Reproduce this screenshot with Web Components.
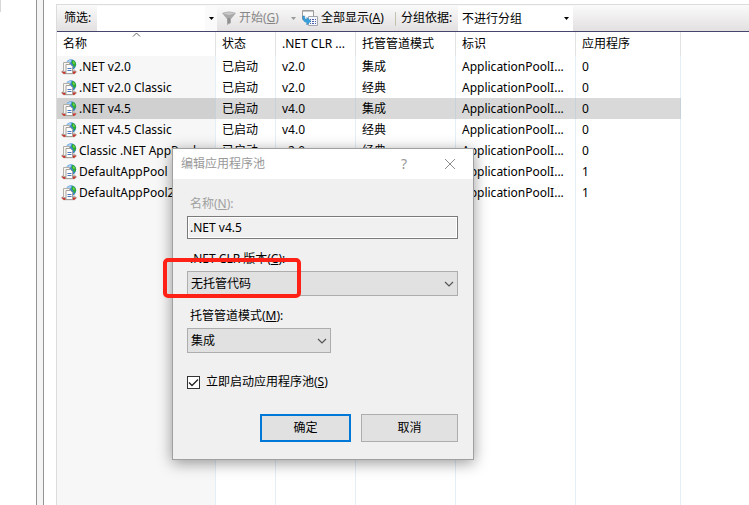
<!DOCTYPE html>
<html lang="zh-CN">
<head>
<meta charset="utf-8">
<title>应用程序池</title>
<style>
    html, body {
        height: 100%;
        margin: 0;
    }

    body {
        font: 12px/20px "Noto Sans", "Noto Sans CJK SC", sans-serif;
        color: #000;
        background: #fff;
        overflow: hidden;
    }
</style>
</head>
<body>
<iis-manager></iis-manager>

<script>
class IisManager extends HTMLElement {
    constructor() {
        super();
        this.attachShadow({ mode: 'open' });
    }

    connectedCallback() {
        this.shadowRoot.innerHTML = `
            <style>
                :host {
                    display: flex;
                    position: relative;
                    height: 100%;
                }

                .tree {
                    flex: 0 0 36px;
                }

                .tree::before {
                    content: "";
                    display: block;
                    width: 1px;
                    height: 12px;
                    background: #d8d8d8;
                }

                .splitter {
                    flex: 0 0 6px;
                    background: #f5f5f5;
                    border: solid #949494;
                    border-width: 0 1px;
                }

                .view {
                    flex: 1;
                    min-width: 0;
                    display: flex;
                    flex-direction: column;
                    margin: 4px 0 0 12px;
                    border: solid #dcdcdc;
                    border-width: 1px 0 0 1px;
                }

                pool-table {
                    flex: 1;
                }

                /* floating window over the list */
                pool-dialog {
                    position: absolute;
                    left: 172px;
                    top: 148px;
                }

                .highlight {
                    position: absolute;
                    left: 163px;
                    top: 258px;
                    width: 130px;
                    height: 32px;
                    border: 4px solid #ff2116;
                    border-radius: 5px;
                    pointer-events: none;
                }
            </style>
            <div class="tree"></div>
            <div class="splitter"></div>
            <main class="view">
                <pool-toolbar></pool-toolbar>
                <pool-table></pool-table>
            </main>
            <pool-dialog></pool-dialog>
            <div class="highlight"></div>
        `;
    }
}

class PoolToolbar extends HTMLElement {
    constructor() {
        super();
        this.attachShadow({ mode: 'open' });
    }

    connectedCallback() {
        this.shadowRoot.innerHTML = `
            <style>
                :host {
                    display: flex;
                    align-items: stretch;
                    height: 26px;
                    padding-left: 7px;
                    background: linear-gradient(#fbfafa, #e2e0e0);
                    border-bottom: 1px solid #45456f;
                    white-space: nowrap;
                }

                label, button {
                    display: flex;
                    align-items: center;
                }

                label.filter {
                    flex: 0 0 33px;
                }

                input, select, button {
                    font: inherit;
                    color: inherit;
                    margin: 0;
                    padding: 0;
                    border: 0;
                    border-radius: 0;
                    background: none;
                    outline: none;
                }

                .combo {
                    display: flex;
                    margin-top: 1px;
                    background: #fff;
                }

                .combo input {
                    width: 108px;
                }

                .drop {
                    justify-content: center;
                    width: 12px;
                    background: #fafafa;
                }

                .tool {
                    gap: 3px;
                }

                .start {
                    margin-left: 5px;
                    color: #868686;
                }

                .more {
                    justify-content: center;
                    width: 9px;
                    margin: 0 4px 0 auto;
                }

                .group-start {
                    display: flex;
                    flex: 0 0 85px;
                }

                .group-show {
                    display: flex;
                    flex: 0 0 93px;
                }

                .separator {
                    width: 1px;
                    margin: 7px 5px 5px 0;
                    background: #c3c2ac;
                }

                label.group {
                    flex: 0 0 57px;
                }

                .select {
                    display: flex;
                    align-items: center;
                    position: relative;
                    margin-top: 1px;
                    background: #fff;
                }

                select {
                    appearance: none;
                    width: 115px;
                    height: 25px;
                    padding-left: 4px;
                }

                .select svg {
                    position: absolute;
                    right: 4px;
                    pointer-events: none;
                }
            </style>
            <label class="filter" for="filter">筛选:</label>
            <div class="combo">
                <input id="filter" type="text">
                <button class="drop" aria-label="筛选选项">
                    <svg width="5" height="3"><path d="M0 0h5L2.5 3z"/></svg>
                </button>
            </div>
            <div class="group-start">
                <button class="tool start">
                    <svg width="14" height="14" viewBox="0 0 14 14">
                        <path d="M0 2Q7-1 14 2L9 8v4l-4 2V8z" fill="#a9a9a9"/>
                        <path d="M1 2.5Q7 0 13 2.5L7 4z" fill="#c9c9c9"/>
                        <path d="M5.5 7L8 7v4.500l-2 1z" fill="#8f8f8f"/>
                    </svg>
                    <span>开始(<u>G</u>)</span>
                </button>
                <button class="more" aria-label="更多">
                    <svg width="5" height="3"><path d="M0 0h5L2.5 3z" fill="#999"/></svg>
                </button>
            </div>
            <div class="group-show">
                <button class="tool">
                    <svg width="16" height="16" viewBox="0 0 16 16">
                        <path d="M.5.5h11v9H.5z" fill="#fafafa" stroke="#9c9c9c"/>
                        <path d="M1 1h10v1H1z" fill="#c8c8c8"/>
                        <path d="M6.500 6.500h9v9h-9z" fill="#f4f6fc" stroke="#a2a6ae"/>
                        <path d="M8 9h1v1H8zM10 9h2v1h-2zM13 9h1v1h-1zM8 11h1v1H8zM10 11h2v1h-2zM13 11h1v1h-1zM8 13h1v1H8zM10 13h2v1h-2zM13 13h1v1h-1z" fill="#4a5fa8"/>
                        <path d="M.8 6c0 4 1 6.200 4 6.200V15l4-4-4-3.500v2.200C3 9.700 2.600 8 2.600 6z" fill="#35a3e0" stroke="#2279b5" stroke-width=".5"/>
                    </svg>
                    <span>全部显示(<u>A</u>)</span>
                </button>
            </div>
            <div class="separator"></div>
            <label class="group" for="group">分组依据:</label>
            <div class="select">
                <select id="group"><option>不进行分组</option></select>
                <svg width="5" height="3"><path d="M0 0h5L2.5 3z"/></svg>
            </div>
        `;
    }
}

class PoolIcon extends HTMLElement {
    constructor() {
        super();
        this.attachShadow({ mode: 'open' });
    }

    connectedCallback() {
        this.shadowRoot.innerHTML = `
            <style>
                :host {
                    display: block;
                    width: 16px;
                    height: 16px;
                }

                svg {
                    display: block;
                }
            </style>
            <svg width="16" height="16" viewBox="0 0 16 16">
                <circle cx="10" cy="5.500" r="5.200" fill="#3c86cf"/>
                <path d="M5 4Q7 .5 10.500.5L10 3 7 5z" fill="#a5cdf0"/>
                <path d="M11.500.8q3.500 1.500 3.600 5l-2 3-1-3-1.600-2z" fill="#2fae2b"/>
                <path d="M12 2l2 2-1.500 1z" fill="#8fe35d"/>
                <path d="M0 13l2.500-2.500h11L16 13l-2.500 2.200h-11z" fill="#bdb9b4"/>
                <path d="M.5 12.500h4v2.500l-2-.3zM11.500 12.500h4l-2 2.200-2 .3z" fill="#c9352b"/>
                <path d="M2.500 3.500h6v9h-6z" fill="#f7f6f3" stroke="#b3afa8"/>
                <path d="M5 5.500h4.500l2 2v7H5z" fill="#fff" stroke="#a5a19a"/>
                <path d="M6.500 9.500h4M6.500 11.500h4" stroke="#4f78bb"/>
            </svg>
        `;
    }
}

const COLUMNS = [
    { title: '名称', width: 159 },
    { title: '状态', width: 60 },
    { title: '.NET CLR ...', width: 80 },
    { title: '托管管道模式', width: 100 },
    { title: '标识', width: 120 },
    { title: '应用程序', width: 105 }
];

const POOLS = [
    ['.NET v2.0', '已启动', 'v2.0', '集成', 'ApplicationPoolI...', 0],
    ['.NET v2.0 Classic', '已启动', 'v2.0', '经典', 'ApplicationPoolI...', 0],
    ['.NET v4.5', '已启动', 'v4.0', '集成', 'ApplicationPoolI...', 0],
    ['.NET v4.5 Classic', '已启动', 'v4.0', '经典', 'ApplicationPoolI...', 0],
    ['Classic .NET AppPool', '已启动', 'v2.0', '经典', 'ApplicationPoolI...', 0],
    ['DefaultAppPool', '已启动', 'v4.0', '集成', 'ApplicationPoolI...', 1],
    ['DefaultAppPool2', '已启动', 'v4.0', '集成', 'ApplicationPoolI...', 1]
];

class PoolTable extends HTMLElement {
    constructor() {
        super();
        this.attachShadow({ mode: 'open' });
        this.selected = 2;
    }

    connectedCallback() {
        this.render();
    }

    renderRow(pool, index) {
        const [name, ...rest] = pool;
        return `
            <tr class="${index === this.selected ? 'selected' : ''}">
                <td><div class="name"><pool-icon></pool-icon>${name}</div></td>
                ${rest.map((value) => `<td>${value}</td>`).join('')}
            </tr>`;
    }

    render() {
        this.shadowRoot.innerHTML = `
            <style>
                :host {
                    display: flex;
                    min-height: 0;
                }

                table {
                    table-layout: fixed;
                    width: 624px;
                    border-collapse: separate;
                    border-spacing: 0;
                }

                th, td {
                    box-sizing: border-box;
                    height: 21px;
                    padding: 0 0 0 6px;
                    border-right: 1px solid #e4eef8;
                    font-weight: normal;
                    text-align: left;
                    white-space: nowrap;
                    overflow: hidden;
                }

                th {
                    position: relative;
                    height: 24px;
                    border-color: #e2e2e2;
                }

                th svg {
                    position: absolute;
                    left: 75px;
                    top: 0;
                }

                td:first-child {
                    padding-left: 4px;
                    background: #f7f7f7;
                }

                .name {
                    display: flex;
                    align-items: center;
                    gap: 2px;
                }

                .selected td {
                    background: #d9d9d9;
                    border-color: #c7d1dc;
                }

                .selected td:first-child {
                    background: #d0d0d0;
                }

                .rest td {
                    height: auto;
                }
            </style>
            <table>
                <colgroup>${COLUMNS.map((c) => `<col style="width: ${c.width}px">`).join('')}</colgroup>
                <thead>
                    <tr>${COLUMNS.map((c, i) => `<th>${c.title}${i === 0 ? '<svg width="9" height="6"><path d="M1 4.5L4.5 1 8 4.5" fill="none" stroke="#666"/></svg>' : ''}</th>`).join('')}</tr>
                </thead>
                <tbody>
                    ${POOLS.map((pool, i) => this.renderRow(pool, i)).join('')}
                    <tr class="rest">${COLUMNS.map(() => '<td></td>').join('')}</tr>
                </tbody>
            </table>
        `;
    }
}

class FormField extends HTMLElement {
    constructor() {
        super();
        this.attachShadow({ mode: 'open' });
    }

    connectedCallback() {
        const value = this.getAttribute('value');
        const control = this.getAttribute('type') === 'select'
            ? `<div class="select">
                    <select id="control"><option>${value}</option></select>
                    <svg width="10" height="6"><path d="M1 1l4 4 4-4" fill="none" stroke="#555" stroke-width="1.2"/></svg>
               </div>`
            : `<input id="control" type="text" readonly value="${value}">`;

        this.shadowRoot.innerHTML = `
            <style>
                :host {
                    display: flex;
                    flex-direction: column;
                    gap: 2px;
                }

                label {
                    padding-left: 3px;
                }

                :host([muted]) label {
                    color: #a0a0a0;
                }

                input, select {
                    box-sizing: border-box;
                    width: 100%;
                    margin: 0;
                    border-radius: 0;
                    font: inherit;
                    color: #000;
                    outline: none;
                }

                input {
                    height: 23px;
                    padding: 0 2px;
                    border: 1px solid #7a7a7a;
                    background: #f0f0f0;
                    box-shadow: inset 0 0 0 1px #fff;
                }

                .select {
                    display: flex;
                    align-items: center;
                    position: relative;
                }

                select {
                    appearance: none;
                    height: 25px;
                    padding: 0 20px 0 3px;
                    border: 1px solid #adadad;
                    background: #e1e1e1;
                }

                .select svg {
                    position: absolute;
                    right: 4px;
                    pointer-events: none;
                }
            </style>
            <label for="control"><slot></slot></label>
            ${control}
        `;
    }
}

class CheckField extends HTMLElement {
    constructor() {
        super();
        this.attachShadow({ mode: 'open' });
    }

    connectedCallback() {
        this.shadowRoot.innerHTML = `
            <style>
                :host {
                    display: block;
                }

                label {
                    display: flex;
                    align-items: center;
                    gap: 6px;
                }

                .box {
                    display: grid;
                }

                .box > * {
                    grid-area: 1 / 1;
                }

                input {
                    appearance: none;
                    box-sizing: border-box;
                    width: 13px;
                    height: 13px;
                    margin: 0;
                    border: 1px solid #333;
                    background: #fff;
                }

                svg {
                    visibility: hidden;
                    pointer-events: none;
                }

                input:checked + svg {
                    visibility: visible;
                }
            </style>
            <label>
                <span class="box">
                    <input type="checkbox" checked>
                    <svg width="13" height="13"><path d="M2 6.5l3 3L11 3.5" fill="none" stroke="#222" stroke-width="1.3"/></svg>
                </span>
                <span><slot></slot></span>
            </label>
        `;
    }
}

class DialogButton extends HTMLElement {
    constructor() {
        super();
        this.attachShadow({ mode: 'open' });
    }

    connectedCallback() {
        this.shadowRoot.innerHTML = `
            <style>
                :host {
                    display: block;
                }

                button {
                    width: 100%;
                    height: 28px;
                    padding: 0;
                    border: 1px solid #adadad;
                    border-radius: 0;
                    background: #e1e1e1;
                    font: inherit;
                    color: #000;
                }

                :host([primary]) button {
                    border: 2px solid #0078d7;
                }
            </style>
            <button><slot></slot></button>
        `;
    }
}

class PoolDialog extends HTMLElement {
    constructor() {
        super();
        this.attachShadow({ mode: 'open' });
    }

    connectedCallback() {
        this.setAttribute('role', 'dialog');
        this.shadowRoot.innerHTML = `
            <style>
                :host {
                    display: block;
                    width: 300px;
                    border: 1px solid #a0a0a0;
                    background: #f0f0f0;
                    box-shadow: 0 3px 14px rgba(0, 0, 0, .4);
                }

                header {
                    display: flex;
                    align-items: center;
                    height: 30px;
                    padding-left: 8px;
                    background: #fff;
                    color: #999;
                }

                h1 {
                    flex: 1;
                    margin: 0;
                    font: inherit;
                }

                header button {
                    display: flex;
                    align-items: center;
                    justify-content: center;
                    width: 46px;
                    height: 30px;
                    padding: 0;
                    border: 0;
                    background: none;
                    font: inherit;
                    font-size: 14px;
                    color: inherit;
                }

                form {
                    display: flex;
                    flex-direction: column;
                    gap: 10px;
                    padding: 15px 15px 17px 14px;
                }

                .mode {
                    width: 144px;
                }

                check-field {
                    margin-top: 9px;
                }

                footer {
                    display: flex;
                    justify-content: flex-end;
                    gap: 10px;
                    margin-top: 12px;
                }

                .ok {
                    width: 91px;
                }

                .cancel {
                    width: 97px;
                }
            </style>
            <header>
                <h1>编辑应用程序池</h1>
                <button aria-label="帮助">?</button>
                <button aria-label="关闭">
                    <svg width="12" height="12"><path d="M1 1l10 10M11 1L1 11" stroke="#8c8c8c"/></svg>
                </button>
            </header>
            <form>
                <form-field muted value=".NET v4.5">名称(<u>N</u>):</form-field>
                <form-field type="select" value="无托管代码">.NET CLR 版本(<u>C</u>):</form-field>
                <form-field class="mode" type="select" value="集成">托管管道模式(<u>M</u>):</form-field>
                <check-field>立即启动应用程序池(<u>S</u>)</check-field>
                <footer>
                    <dialog-button class="ok" primary>确定</dialog-button>
                    <dialog-button class="cancel">取消</dialog-button>
                </footer>
            </form>
        `;
    }
}

customElements.define('pool-icon', PoolIcon);
customElements.define('pool-toolbar', PoolToolbar);
customElements.define('pool-table', PoolTable);
customElements.define('form-field', FormField);
customElements.define('check-field', CheckField);
customElements.define('dialog-button', DialogButton);
customElements.define('pool-dialog', PoolDialog);
customElements.define('iis-manager', IisManager);
</script>
</body>
</html>
